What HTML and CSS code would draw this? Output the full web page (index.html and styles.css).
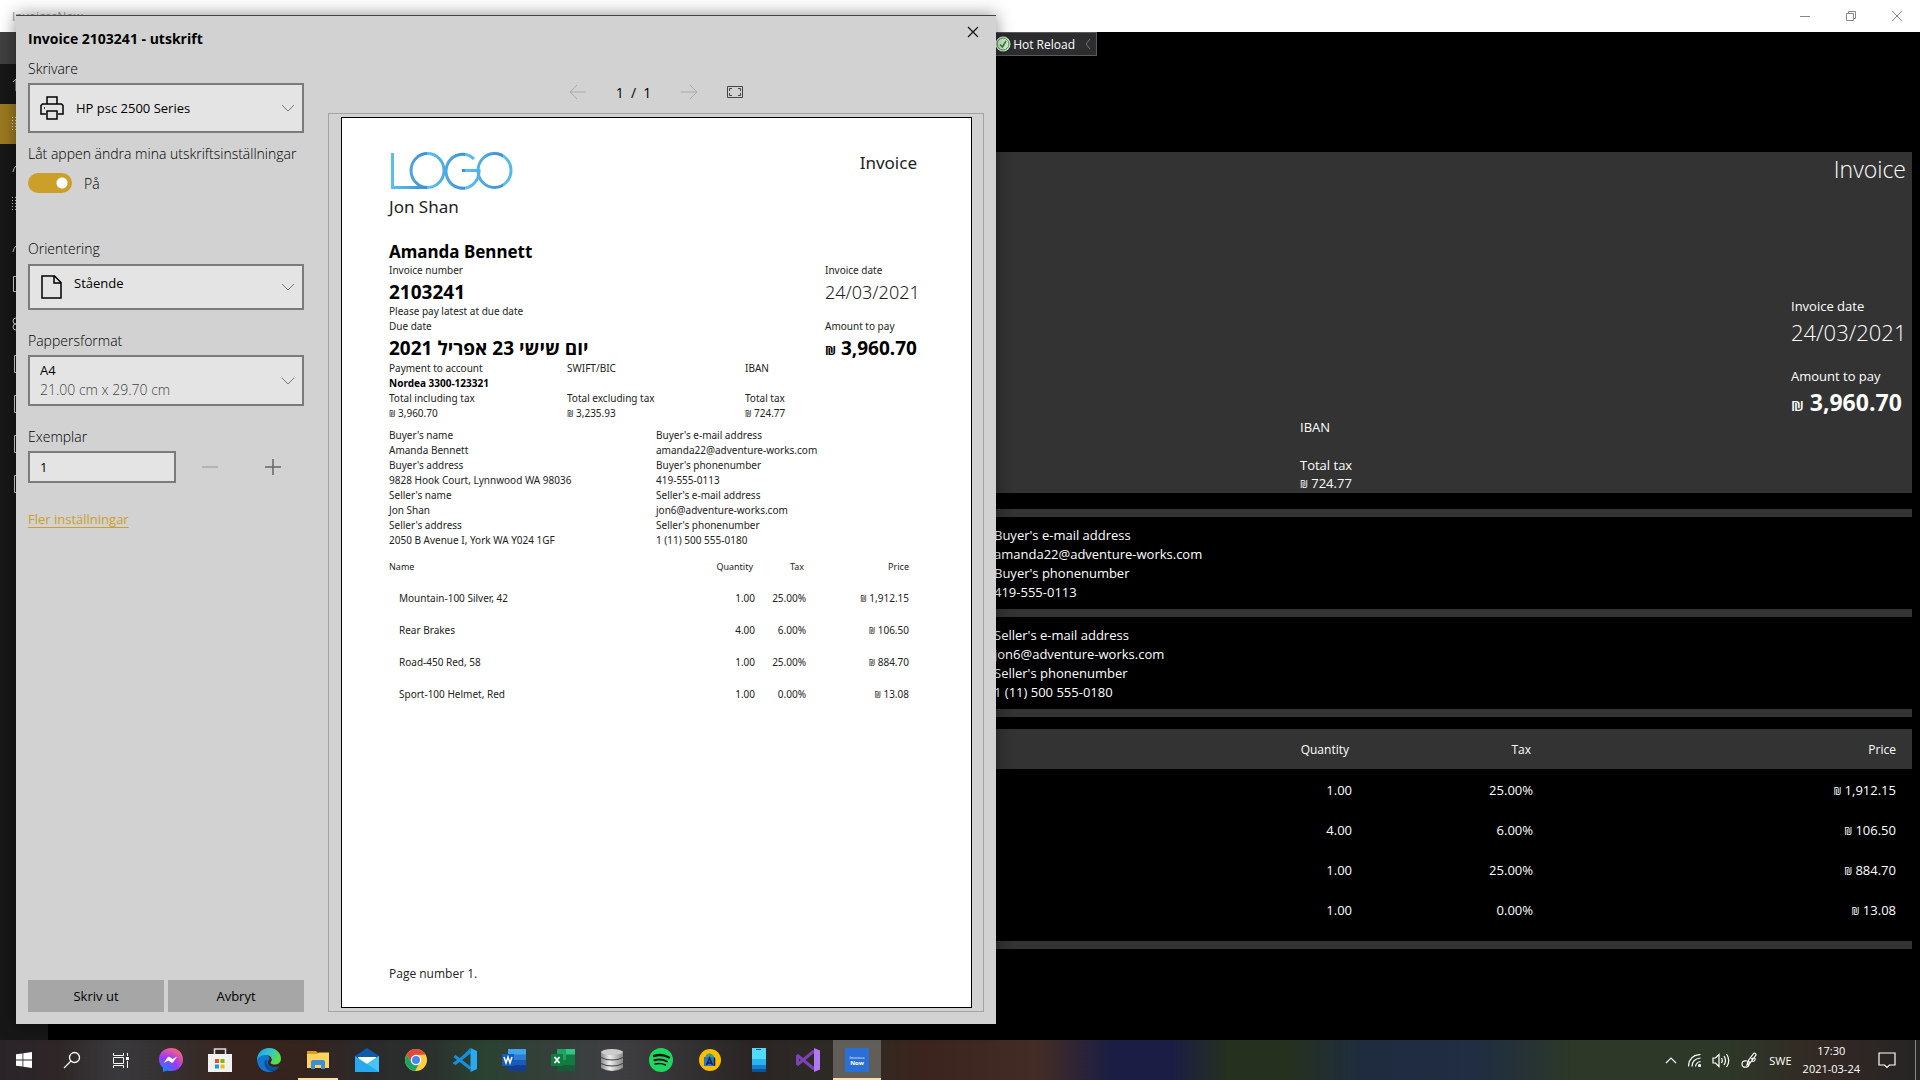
FILE: index.html
```html
<!DOCTYPE html>
<html lang="sv">
<head>
<meta charset="utf-8">
<title>InvoicesNow</title>
<link rel="stylesheet" href="styles.css">
</head>
<body>
<div class="desktop">
  <div class="app">
    <header class="titlebar">
      <span class="app-name">InvoicesNow</span>
      <button class="win-btn" aria-label="Minimize"><svg width="12" height="12" viewBox="0 0 12 12"><path d="M1 6.5h10"/></svg></button>
      <button class="win-btn" aria-label="Restore"><svg width="12" height="12" viewBox="0 0 12 12"><path d="M1.500 3.500h7v7h-7zM3.500 3.500v-2h7v7h-2"/></svg></button>
      <button class="win-btn" aria-label="Close"><svg width="12" height="12" viewBox="0 0 12 12"><path d="M1 1l10 10M11 1L1 11"/></svg></button>
    </header>
    <div class="app-body">
      <nav class="nav" aria-label="Main">
        <div class="nav-back"></div>
        <a href="#" class="nav-item" aria-label="Home"><svg width="20" height="20" viewBox="0 0 20 20"><path d="M1 8l3-3v12h12V5"/></svg></a>
        <a href="#" class="nav-item current" aria-label="Invoices"><svg width="20" height="20" viewBox="0 0 20 20"><path stroke-dasharray="1 2" d="M.5 3v14M3.500 3v14M7 4h12M7 10h12M7 16h12"/></svg></a>
        <a href="#" class="nav-item" aria-label="Customers"><svg width="20" height="20" viewBox="0 0 20 20"><path d="M1 18q1-7 8-8t9 8M5 6a4 4 0 108 0 4 4 0 10-8 0"/></svg></a>
        <a href="#" class="nav-item" aria-label="Items"><svg width="20" height="20" viewBox="0 0 20 20"><path stroke-dasharray="1 2" d="M.5 3v14M3.500 3v14M7 4h12M7 10h12M7 16h12"/></svg></a>
        <a href="#" class="nav-item" aria-label="Sellers"><svg width="20" height="20" viewBox="0 0 20 20"><path d="M1 18q1-7 8-8t9 8M5 6a4 4 0 108 0 4 4 0 10-8 0"/></svg></a>
        <a href="#" class="nav-item" aria-label="Documents"><svg width="20" height="20" viewBox="0 0 20 20"><path d="M1.500 2.500h13v15h-13z"/></svg></a>
        <a href="#" class="nav-item" aria-label="Taxes"><svg width="20" height="20" viewBox="0 0 20 20"><path d="M1 7a3 3 0 106 0 3 3 0 10-6 0M1 13a3 3 0 106 0 3 3 0 10-6 0"/></svg></a>
        <a href="#" class="nav-item" aria-label="Page 1"><svg width="20" height="20" viewBox="0 0 20 20"><path d="M2.500 1.500h13v17h-13z"/></svg></a>
        <a href="#" class="nav-item" aria-label="Page 2"><svg width="20" height="20" viewBox="0 0 20 20"><path d="M2.500 1.500h13v17h-13z"/></svg></a>
        <a href="#" class="nav-item" aria-label="Page 3"><svg width="20" height="20" viewBox="0 0 20 20"><path d="M2.500 1.500h13v17h-13z"/></svg></a>
        <a href="#" class="nav-item" aria-label="Page 4"><svg width="20" height="20" viewBox="0 0 20 20"><path d="M2.500 1.500h13v17h-13z"/></svg></a>
      </nav>
      <main class="content">
        <div class="toolbar-row">
          <button class="hot-reload"><svg width="16" height="16" viewBox="0 0 16 16"><circle cx="8" cy="8" r="7.500" fill="#e4f1e4"/><circle cx="8" cy="8" r="6" fill="#d5ecd5" stroke="#3c9a3f"/><path d="M5 8.500l2.500 2.500L11 5" fill="none" stroke="#2c8a30" stroke-width="1.600"/></svg><span>Hot Reload</span><svg width="6" height="12" viewBox="0 0 6 12"><path d="M5 1L1 6l4 5" fill="none" stroke="#777"/></svg></button>
        </div>
        <section class="panel">
          <h1 class="panel-title">Invoice</h1>
          <div class="panel-side">
            <div class="txt">Invoice date</div>
            <div class="big">24/03/2021</div>
            <div class="txt amount-label">Amount to pay</div>
            <div class="big strong"><small>₪</small> 3,960.70</div>
          </div>
          <div class="panel-iban">
            <div class="txt">IBAN</div>
            <div class="txt tax-label">Total tax</div>
            <div class="txt tax-value"><small>₪</small> 724.77</div>
          </div>
        </section>
        <section class="contact">
          <div class="txt">Buyer's e-mail address</div><div class="txt">amanda22@adventure-works.com</div><div class="txt">Buyer's phonenumber</div><div class="txt">419-555-0113</div>
        </section>
        <section class="contact">
          <div class="txt">Seller's e-mail address</div><div class="txt">jon6@adventure-works.com</div><div class="txt">Seller's phonenumber</div><div class="txt">1 (11) 500 555-0180</div>
        </section>
        <div class="bar"></div>
        <table class="lines">
          <thead><tr><th></th><th class="q">Quantity</th><th class="t">Tax</th><th class="p">Price</th></tr></thead>
          <tbody>
            <tr><td></td><td class="q">1.00</td><td class="t">25.00%</td><td class="p"><small>₪</small> 1,912.15</td></tr>
            <tr><td></td><td class="q">4.00</td><td class="t">6.00%</td><td class="p"><small>₪</small> 106.50</td></tr>
            <tr><td></td><td class="q">1.00</td><td class="t">25.00%</td><td class="p"><small>₪</small> 884.70</td></tr>
            <tr><td></td><td class="q">1.00</td><td class="t">0.00%</td><td class="p"><small>₪</small> 13.08</td></tr>
          </tbody>
        </table>
        <div class="bar"></div>
      </main>
    </div>
  </div>

  <div class="dialog" role="dialog" aria-labelledby="dlg-title">
    <form class="settings">
      <h2 id="dlg-title">Invoice 2103241 - utskrift</h2>
      <label class="label first" for="printer">Skrivare</label>
      <div class="combo tall">
        <select id="printer" class="with-icon"><option>HP psc 2500 Series</option></select>
        <svg class="lead" width="24" height="24" viewBox="0 0 24 24"><path d="M7 8V1h10v7M6 18H1V9.500L2.500 8h19L23 9.500V18h-5M7 15h10v8H7z"/><path d="M4 12h1"/></svg>
        <svg class="chev" width="14" height="8" viewBox="0 0 14 8"><path d="M1 1l6 6 6-6"/></svg>
      </div>
      <label class="label setting" for="allow">Låt appen ändra mina utskriftsinställningar</label>
      <div class="switch-row"><input id="allow" type="checkbox" class="switch" checked><span>På</span></div>
      <label class="label orient" for="orient">Orientering</label>
      <div class="combo mid">
        <select id="orient" class="with-icon doc"><option>Stående</option></select>
        <svg class="lead" width="24" height="24" viewBox="0 0 24 24"><path d="M2 1h12.500L21 7.500V23H2zM14 1v7h7"/></svg>
        <svg class="chev" width="14" height="8" viewBox="0 0 14 8"><path d="M1 1l6 6 6-6"/></svg>
      </div>
      <label class="label paper" for="paper">Pappersformat</label>
      <div class="combo size">
        <select id="paper" class="two-line"><option>A4</option></select>
        <span class="dims">21.00 cm x 29.70 cm</span>
        <svg class="chev" width="14" height="8" viewBox="0 0 14 8"><path d="M1 1l6 6 6-6"/></svg>
      </div>
      <label class="label paper" for="copies">Exemplar</label>
      <div class="copies">
        <input id="copies" type="text" value="1">
        <button type="button" class="step off" aria-label="Minska"><svg width="16" height="16" viewBox="0 0 16 16"><path d="M0 8h16"/></svg></button>
        <button type="button" class="step" aria-label="Öka"><svg width="16" height="16" viewBox="0 0 16 16"><path d="M0 8h16M8 0v16"/></svg></button>
      </div>
      <a href="#" class="more">Fler inställningar</a>
      <div class="actions"><button type="button">Skriv ut</button><button type="button">Avbryt</button></div>
    </form>
    <div class="preview">
      <div class="close-row"><button class="close" aria-label="Stäng"><svg width="12" height="12" viewBox="0 0 12 12"><path d="M1 1l10 10M11 1L1 11" stroke="#111" fill="none" stroke-width="1.200"/></svg></button></div>
      <div class="pager">
        <button aria-label="Föregående"><svg width="18" height="16" viewBox="0 0 18 16"><path d="M17 8H1M8 1L1 8l7 7" stroke="#aaa"/></svg></button>
        <span class="pages">1&nbsp; / &nbsp;1</span>
        <button aria-label="Nästa"><svg width="18" height="16" viewBox="0 0 18 16"><path d="M1 8h16M10 1l7 7-7 7" stroke="#aaa"/></svg></button>
        <button class="fit" aria-label="Anpassa"><svg width="16" height="12" viewBox="0 0 16 12"><path d="M.5.5h15v11H.5z" stroke="#444"/><path d="M2.500 5V2.500H5M11 2.500h2.500V5M13.500 7v2.500H11M5 9.500H2.500V7" stroke="#444"/></svg></button>
      </div>
      <div class="frame">
        <article class="sheet">
          <div class="sheet-top">
            <svg class="logo" role="img" aria-label="LOGO" width="124" height="38" viewBox="0 0 124 38"><defs><linearGradient id="lg" gradientUnits="userSpaceOnUse" x1="0" y1="0" x2="38" y2="0" spreadMethod="repeat"><stop offset="0" stop-color="#5bc3f0"/><stop offset="1" stop-color="#3f8fd4"/></linearGradient></defs><g fill="none" stroke="url(#lg)" stroke-width="3"><path d="M3.500 1v34.500H38"/><ellipse cx="38.500" cy="18.500" rx="16.500" ry="17"/><path d="M85 7A16.500 17 0 1 0 90 18.500H73"/><ellipse cx="105.500" cy="18.500" rx="16.500" ry="17"/></g></svg>
            <div class="s-lg">Invoice</div>
          </div>
          <div class="s-lg">Jon Shan</div>
          <div class="split name-row">
            <div>
              <div class="s-lg strong name">Amanda Bennett</div>
              <div class="s-sm">Invoice number</div>
              <div class="s-lg strong hi">2103241</div>
              <div class="s-sm">Please pay latest at due date</div>
              <div class="s-sm">Due date</div>
              <div class="s-lg strong hi heb" dir="rtl" lang="he">יום שישי 23 אפריל 2021</div>
            </div>
            <div class="dates">
              <div class="s-sm">Invoice date</div>
              <div class="s-lg hi light">24/03/2021</div>
              <div class="s-sm gap">Amount to pay</div>
              <div class="s-lg strong hi"><small>₪</small> 3,960.70</div>
            </div>
          </div>
          <div class="three">
            <div class="s-sm">Payment to account</div><div class="s-sm">SWIFT/BIC</div><div class="s-sm">IBAN</div>
            <div class="s-sm strong full">Nordea 3300-123321</div>
            <div class="s-sm">Total including tax</div><div class="s-sm">Total excluding tax</div><div class="s-sm">Total tax</div>
            <div class="s-sm"><small>₪</small> 3,960.70</div><div class="s-sm"><small>₪</small> 3,235.93</div><div class="s-sm"><small>₪</small> 724.77</div>
          </div>
          <div class="two">
            <div class="s-sm">Buyer's name</div><div class="s-sm">Buyer's e-mail address</div>
            <div class="s-sm">Amanda Bennett</div><div class="s-sm">amanda22@adventure-works.com</div>
            <div class="s-sm">Buyer's address</div><div class="s-sm">Buyer's phonenumber</div>
            <div class="s-sm">9828 Hook Court, Lynnwood WA 98036</div><div class="s-sm">419-555-0113</div>
            <div class="s-sm">Seller's name</div><div class="s-sm">Seller's e-mail address</div>
            <div class="s-sm">Jon Shan</div><div class="s-sm">jon6@adventure-works.com</div>
            <div class="s-sm">Seller's address</div><div class="s-sm">Seller's phonenumber</div>
            <div class="s-sm">2050 B Avenue I, York WA Y024 1GF</div><div class="s-sm">1 (11) 500 555-0180</div>
          </div>
          <table class="items">
            <thead><tr><th class="n">Name</th><th>Quantity</th><th class="it">Tax</th><th class="ip">Price</th></tr></thead>
            <tbody>
              <tr><td class="n">Mountain-100 Silver, 42</td><td>1.00</td><td class="it">25.00%</td><td class="ip"><small>₪</small> 1,912.15</td></tr>
              <tr><td class="n">Rear Brakes</td><td>4.00</td><td class="it">6.00%</td><td class="ip"><small>₪</small> 106.50</td></tr>
              <tr><td class="n">Road-450 Red, 58</td><td>1.00</td><td class="it">25.00%</td><td class="ip"><small>₪</small> 884.70</td></tr>
              <tr><td class="n">Sport-100 Helmet, Red</td><td>1.00</td><td class="it">0.00%</td><td class="ip"><small>₪</small> 13.08</td></tr>
            </tbody>
          </table>
          <div class="page-no">Page number 1.</div>
        </article>
      </div>
    </div>
  </div>

  <footer class="taskbar">
    <div class="system">
      <button class="task" aria-label="Start"><svg width="16" height="16" viewBox="0 0 16 16"><path fill="#fff" d="M0 2.300l6.500-.9v6.200H0zM7.300 1.300L16 0v7.600H7.300zM0 8.400h6.500v6.200L0 13.700zM7.300 8.400H16V16l-8.700-1.300z"/></svg></button>
      <button class="task" aria-label="Sök"><svg width="18" height="18" viewBox="0 0 18 18"><g fill="none" stroke="#fff" stroke-width="1.300"><circle cx="11.500" cy="6.500" r="5"/><path d="M8 10l-7 7"/></g></svg></button>
      <button class="task" aria-label="Aktivitetsvy"><svg width="17" height="17" viewBox="0 0 17 17"><g fill="none" stroke="#fff"><path d="M1.500 1v2.500h10V1M1.500 16v-2.500h10V16M1.500 5.500h10v6h-10zM15.500 1v3M15.500 9v7"/></g><path fill="#fff" d="M14 5h3v3h-3z"/></svg></button>
    </div>
    <div class="pinned">
      <button class="task" aria-label="Messenger"><svg width="24" height="24" viewBox="0 0 24 24"><defs><radialGradient id="ms" cx=".2" cy="1" r="1.100"><stop offset="0" stop-color="#0a8dff"/><stop offset=".55" stop-color="#9b38fa"/><stop offset="1" stop-color="#ff6575"/></radialGradient></defs><path fill="url(#ms)" d="M12 0C5 0 0 5 0 11.500c0 3.500 1.500 6.300 4 8.300V24l4-1.500c1.200.4 2.600.6 4 .6 7 0 12-5 12-11.600S19 0 12 0z"/><path fill="#fff" d="M4.800 15l3.600-5.600c.6-.8 1.600-1 2.400-.4l2.700 2 4.500-2.600-3.600 5.600c-.6.8-1.600 1-2.400.4l-2.700-2z"/></svg></button>
      <button class="task" aria-label="Microsoft Store"><svg width="24" height="24" viewBox="0 0 24 24"><path fill="none" stroke="#ddd" stroke-width="1.500" d="M6.500 7V1h11v6"/><path fill="#f1f1f1" d="M0 6h24v18H0z"/><path fill="#f25022" d="M7 11h4v4H7z"/><path fill="#7fba00" d="M12.500 11h4v4h-4z"/><path fill="#00a4ef" d="M7 16.500h4v4H7z"/><path fill="#ffb900" d="M12.500 16.500h4v4h-4z"/></svg></button>
      <button class="task" aria-label="Edge"><svg width="24" height="24" viewBox="0 0 24 24"><defs><linearGradient id="ed" x1="0" y1="0" x2="1" y2=".4"><stop offset="0" stop-color="#1a9be0"/><stop offset=".5" stop-color="#2fc2d8"/><stop offset="1" stop-color="#5fdc4a"/></linearGradient></defs><path fill="#1277cc" d="M0 11C1 7 6 5 10 7c3 1.500 3 4 1.500 5.500C9 17 15 21 22 18.500 18 25 8 26 3 20 1 17.500 0 14 0 11z"/><path fill="url(#ed)" d="M0 12C0 5 5 0 12 0s12 5 12 10.500c0 4-3 6-6.500 6-3 0-4.500-1-3.500-2.500 2-3 0-7-5-7-4.500 0-8 2-9 5z"/><path fill="#0c4f9e" d="M8 12c-2 5 1 11 7 11.500 3-.6 5.600-2.500 7-5-6 2.500-12-.5-12-4.500 0-1 .5-2 .5-2z"/></svg></button>
      <button class="task open" aria-label="Utforskaren"><svg width="22" height="20" viewBox="0 0 22 20"><path fill="#dd9e16" d="M0 1h9l2 2v4H0z"/><path fill="#ffd45e" d="M0 4h10l2-1.500h10V18H0z"/><path fill="#3c8ed6" d="M4 19v-7q0-2 2-2h10q2 0 2 2v7h-4v-4H8v4z"/></svg></button>
      <button class="task" aria-label="E-post"><svg width="24" height="24" viewBox="0 0 24 24"><path fill="#0b5cad" d="M0 8L12 0l12 8v4H0z"/><path fill="#fff" d="M3 9h18v7H3z"/><path fill="#2aa8ee" d="M0 8l12 8 12-8v16H0z"/><path fill="#41c6f7" d="M24 8v16L12 16z"/></svg></button>
      <button class="task" aria-label="Chrome"><svg width="22" height="22" viewBox="0 0 22 22"><circle cx="11" cy="11" r="11" fill="#ffcd40"/><path fill="#de4a3c" d="M1.500 5.500a11 11 0 0119 0L11 6l-4.500 7.500z"/><path fill="#1da362" d="M1.500 5.500a11 11 0 008.500 16.400l4.500-8-8-.4z"/><circle cx="11" cy="11" r="5.200" fill="#fff"/><circle cx="11" cy="11" r="4" fill="#4587f2"/></svg></button>
      <button class="task" aria-label="VS Code"><svg width="24" height="24" viewBox="0 0 24 24"><path fill="#1486cf" d="M17 0L3.500 14.200 1 16.500-.2 15.500v-1L17 4z"/><path fill="none" stroke="#1890d8" stroke-width="3" d="M1.500 8l16 12.500M1.500 16l16-12.500"/><path fill="#29a9f2" d="M17.500 0L24 3v18l-6.500 3z"/></svg></button>
      <button class="task" aria-label="Word"><svg width="24" height="22" viewBox="0 0 24 22"><path fill="#41a5ee" d="M6 0h18v6H6z"/><path fill="#2b7cd3" d="M6 5.500h18V11H6z"/><path fill="#185abd" d="M6 11h18v5.500H6z"/><path fill="#103f91" d="M6 16.500h18V22H6z"/><path fill="#185abd" d="M0 5h12v12H0z"/><path fill="none" stroke="#fff" stroke-width="1.500" d="M2 8l2 6 2-6 2 6 2-6"/></svg></button>
      <button class="task" aria-label="Excel"><svg width="24" height="22" viewBox="0 0 24 22"><path fill="#21a366" d="M6 0h9v11H6z"/><path fill="#33c481" d="M15 0h9v6h-9z"/><path fill="#107c41" d="M6 11h9v5H6zM15 5.500h9V11h-9z"/><path fill="#185c37" d="M6 16h18v6H6z"/><path fill="#107c41" d="M15 11h9v5h-9zM0 5h12v12H0z"/><path fill="none" stroke="#fff" stroke-width="1.800" d="M3.500 8l5 6M8.500 8l-5 6"/></svg></button>
      <button class="task" aria-label="Databas"><svg width="22" height="22" viewBox="0 0 22 22"><defs><linearGradient id="db"><stop offset="0" stop-color="#888"/><stop offset=".4" stop-color="#eee"/><stop offset="1" stop-color="#888"/></linearGradient></defs><g fill="url(#db)"><path d="M0 15q11 5 22 0v4q-11 6-22 0z"/><path d="M0 9q11 5 22 0v5q-11 5-22 0z"/><path d="M0 3q11 5 22 0v5q-11 5-22 0z"/></g><ellipse cx="11" cy="3" rx="11" ry="3" fill="#ccc"/></svg></button>
      <button class="task" aria-label="Spotify"><svg width="24" height="24" viewBox="0 0 24 24"><circle cx="12" cy="12" r="12" fill="#1ed760"/><g fill="none" stroke="#191414" stroke-linecap="round"><path stroke-width="2.400" d="M5 8q8-2.500 15 1.500"/><path stroke-width="2" d="M5.500 12.200q7-2 12.500 1.300"/><path stroke-width="1.600" d="M6 16q6-1.500 10.500 1"/></g></svg></button>
      <button class="task" aria-label="AI"><svg width="22" height="22" viewBox="0 0 22 22"><circle cx="11" cy="11" r="11" fill="#fbbc05"/><path fill="#35a56f" d="M7 6q4-4 8 1v3H7z"/><path fill="#2b73d2" d="M5 8h11v9H5z"/><path fill="none" stroke="#15233c" stroke-width="1.500" d="M7.500 16l3-7 3 7M8.500 14h4M15.500 9v8"/></svg></button>
      <button class="task" aria-label="Telefon"><svg width="14" height="24" viewBox="0 0 14 24"><path fill="#50dcf8" d="M0 0h14v24H0z"/><path fill="#29b4ef" d="M0 11h14v13H0z"/><path fill="#127fd3" d="M0 17h14v7H0z"/><path fill="#115293" d="M0 21h14v3H0z"/><path stroke="#175d88" d="M4 1.500h5"/></svg></button>
      <button class="task" aria-label="Visual Studio"><svg width="24" height="24" viewBox="0 0 24 24"><path fill="none" stroke="#7942b5" stroke-width="3" d="M1.500 7v10M1 7l17 14M1 17L18 3"/><path fill="#b179f1" d="M18 0l6 2.500v19L18 24z"/></svg></button>
      <button class="task open active"><span class="tile"><small>Invoices</small><b>Now</b></span></button>
    </div>
    <div class="tray">
      <svg width="12" height="7" viewBox="0 0 12 7"><path d="M1 6l5-5 5 5"/></svg>
      <svg width="13" height="13" viewBox="0 0 13 13"><path d="M.5 12.500Q1 1 12.500.500M4 12.500Q4 5 12.500 4M7.500 12.500Q8 8.500 12.500 7.500"/><circle cx="11.500" cy="11.500" r="1" fill="#fff"/></svg>
      <svg width="18" height="15" viewBox="0 0 18 15"><path d="M1 5v5h2.500L7 13.500v-12L3.500 5zM9.500 5q1.500 2.500 0 5M12 3q3 4.500 0 9M14.500 1q4.500 6.500 0 13"/></svg>
      <svg class="pen" width="17" height="16" viewBox="0 0 17 16"><path d="M6 9q-5-1-5 3t5 3q3-1 2-6M6 13l1-4 6-8q2 0 2 2L9 11zM10 7q5-2 4 1-1 2-3 1"/></svg>
      <span class="lang">SWE</span>
      <div class="clock"><div>17:30</div><div>2021-03-24</div></div>
      <svg class="note" width="18" height="17" viewBox="0 0 18 17"><path d="M1 1h16v12h-5.500L9 15.500 6.500 13H1z"/></svg>
      <div class="peek"></div>
    </div>
  </footer>
</div>
</body>
</html>
```
FILE: styles.css
```css
* { box-sizing: border-box; }
body { margin: 0; background: #000; font-family: "Open Sans", "Noto Sans", sans-serif; font-size: 13px; }
button { border: 0; padding: 0; background: none; font: inherit; color: inherit; }
h1, h2 { margin: 0; }
svg { flex: none; display: block; }
small { font-size: 10px; font-weight: 400; }
.desktop { position: relative; display: flex; flex-direction: column; height: 100vh; overflow: hidden; }

/* application window */
.app { flex: 1; min-height: 0; display: flex; flex-direction: column; overflow: hidden; color: #fff; }
.titlebar { display: flex; flex: none; height: 32px; align-items: center; background: #fff; color: #999; font-size: 12px; }
.app-name { flex: 1; padding-left: 12px; }
.win-btn { width: 46px; height: 32px; display: grid; place-items: center; }
.win-btn svg { fill: none; stroke: #888; }
.app-body { flex: 1; min-height: 0; display: flex; }
.nav { width: 48px; background: #171717; }
.nav-back { height: 32px; background: #404040; }
.nav-item { display: flex; height: 40px; align-items: center; padding-left: 12px; }
.nav-item svg { fill: none; stroke: #ddd; }
.nav-item.current { background: #9d7a20; }
.content { flex: 1; padding: 0 8px; }
.toolbar-row { height: 120px; display: flex; justify-content: center; }
.hot-reload { display: flex; align-items: center; gap: 2px; height: 24px; width: 226px; padding: 0 5px 0 0; justify-content: flex-end; background: #2d2d30; border: 1px solid #5a5a5e; color: #fff; font-size: 12px; }
.hot-reload span { margin-right: 8px; }
.txt { line-height: 19px; }
.big { font-size: 22px; font-weight: 300; line-height: 32px; }
.big.strong { font-size: 23px; font-weight: 700; }
.big small { font-size: 15px; font-weight: 600; }
.strong { font-weight: 700; }
.panel { display: grid; grid-template-columns: 1fr auto; grid-template-rows: 1fr auto auto; height: 341px; padding: 0 6px 0 20px; background: #333; }
.panel-title { grid-column: 1 / 3; padding-top: 2px; font-size: 23px; font-weight: 300; line-height: 30px; text-align: right; }
.panel-side { grid-column: 2; width: 115px; margin-bottom: -3px; white-space: nowrap; }
.amount-label { margin-top: 19px; }
.panel-iban { grid-column: 1 / 3; padding-left: 1224px; }
.tax-label { margin-top: 19px; }
.tax-value { line-height: 17px; }
.contact { height: 100px; padding: 9px 0 0 938px; border-top: 8px solid #333; }
.panel + .contact { margin-top: 16px; }
.bar { height: 8px; background: #333; }
.lines { width: 100%; margin: 12px 0; border-collapse: collapse; table-layout: fixed; text-align: right; }
.lines th { height: 40px; padding: 0; background: #333; font-size: 12px; font-weight: 400; }
.lines td { height: 40px; padding: 1px 0 0; }
.lines th:first-child { width: 1100px; }
.lines .t { width: 181px; }
.lines .p { width: 379px; padding-right: 16px; }
.lines th.q { padding-right: 3px; }
.lines th.t { padding-right: 2px; }

/* print dialog */
.dialog { position: absolute; top: 15px; bottom: 56px; left: 16px; width: 980px; display: flex; gap: 24px; padding: 0 12px; background: #d2d2d2; border-top: 1px solid #444; box-shadow: 0 0 16px rgba(0, 0, 0, .45); color: #000; }
.settings { width: 276px; display: flex; flex-direction: column; padding: 12px 0; font-size: 13px; }
.settings h2 { font-size: 14px; line-height: 22px; }
.label { font-size: 14px; line-height: 20px; font-weight: 300; white-space: nowrap; }
.first { margin: 9px 0 4px; }
.combo { display: grid; }
.combo > * { grid-area: 1 / 1; }
.combo select { appearance: none; width: 100%; height: 50px; border: 2px solid #7b7b7b; border-radius: 0; background: #e4e4e4; color: #000; font: inherit; padding: 0 30px 0 10px; }
.combo .with-icon { padding-left: 46px; }
.combo .doc { height: 46px; padding: 0 30px 8px 44px; }
.combo .two-line { height: 51px; padding-bottom: 21px; }
.combo svg, .dims { align-self: center; pointer-events: none; fill: none; stroke: #000; }
.lead { margin-left: 12px; stroke-width: 1.500; }
.combo .chev { justify-self: end; margin-right: 9px; stroke: #777; }
.combo .dims { align-self: end; padding: 0 0 6px 12px; font-size: 14px; font-weight: 300; line-height: 20px; color: #444; }
.setting { margin: 11px 0 9px; }
.switch-row { display: flex; align-items: center; gap: 12px; height: 20px; font-size: 14px; font-weight: 300; }
.switch { appearance: none; width: 44px; height: 20px; margin: 0; border-radius: 10px; background: radial-gradient(circle at 34px 10px, #fff 5px, #cc9f29 6px); }
.orient { margin: 46px 0 5px; }
.paper { margin: 21px 0 4px; }
.copies { display: flex; align-items: center; }
.copies input { width: 148px; height: 32px; margin-right: 2px; border: 2px solid #7b7b7b; background: #e4e4e4; padding: 0 10px; font: inherit; }
.step { width: 64px; height: 32px; display: grid; place-items: center; }
.step svg { stroke: #666; stroke-width: 1.500; }
.step.off svg { stroke: #aaa; }
.more { align-self: flex-start; margin-top: 26px; line-height: 20px; color: #cc9f29; text-underline-offset: 3px; }
.actions { display: flex; gap: 4px; margin-top: auto; }
.actions button { flex: 1; height: 32px; background: #a6a6a6; }
.preview { flex: 1; min-width: 0; display: flex; flex-direction: column; padding-bottom: 12px; }
.close-row { display: flex; justify-content: flex-end; height: 56px; padding-top: 10px; padding-right: 5px; }
.close { height: 12px; }
.pager { display: flex; justify-content: center; align-items: center; height: 41px; padding-bottom: 1px; gap: 29px; }
.pager svg { fill: none; }
.pages { font-size: 14px; }
.frame { flex: 1; display: flex; padding: 3px 11px 3px 12px; border: 1px solid #a3a3a3; }

/* previewed page */
.sheet { flex: 1; display: flex; flex-direction: column; padding: 34px 54px 25px 47px; border: 1px solid #000; background: #fff; color: #222; font-family: "Noto Sans", "Open Sans", sans-serif; }
.sheet-top { display: flex; justify-content: space-between; height: 44px; }
.s-lg { font-size: 17px; line-height: 22px; }
.s-sm { font-size: 10px; line-height: 15px; white-space: nowrap; }
.s-lg.strong, .s-sm.strong { color: #000; }
.s-lg small { font-size: 12px; font-weight: 700; }
.s-sm small, .items small { font-size: 8px; }
.name { line-height: 23px; }
.hi { height: 26px; padding-top: 2px; line-height: 24px; }
.hi.strong { font-size: 19px; }
.light { font-size: 18px; font-weight: 300; }
.split { display: flex; justify-content: space-between; align-items: flex-end; }
.name-row { margin-top: 22px; }
.dates { width: 92px; white-space: nowrap; }
.gap { margin-top: 15px; }
.three { display: grid; grid-template-columns: 178px 178px 1fr; margin-top: 1px; }
.full { grid-column: 1 / 4; }
.two { display: grid; grid-template-columns: 267px 1fr; margin-top: 7px; }
.items { margin-top: 2px; border-collapse: collapse; font-size: 10px; text-align: right; }
.items th { height: 32px; padding: 0 2px 0 0; font-size: 9px; font-weight: 400; }
.items td { height: 32px; padding: 0; }
.items .n { text-align: left; }
.items td.n { padding-left: 10px; }
.items .it { width: 51px; }
.items .ip { width: 111px; padding-right: 8px; }
.page-no { margin-top: auto; font-family: "Open Sans", sans-serif; font-size: 12px; line-height: 16px; }

/* taskbar */
.taskbar { display: flex; flex: none; height: 40px; color: #fff; background: linear-gradient(90deg, #2a242a 0, #2e2626 3%, #39393d 6%, #35302f 9%, #38241e 12%, #35231e 16%, #2b2a2b 19%, #2b2e2d 22%, #2a4131 25%, #3f3f43 32%, #2a2524 39%, #2e2b25 44%, #3b241d 48%, #432c25 54%, #1b1d44 58%, #1b1d44 61%, #26301e 64%, #26301e 67%, #1f2c40 71%, #202d42 77%, #2d3828 82%, #2d3828 90%, #332824 95%, #262424 100%); }
.system { display: flex; margin-right: 3px; }
.pinned { display: flex; gap: 1px; }
.task { width: 48px; display: grid; place-items: center; }
.open { background: linear-gradient(#fce2a0, #fce2a0) center bottom / 40px 2px no-repeat; }
.active { background: linear-gradient(#fce2a0, #fce2a0) center bottom / 48px 2px no-repeat, #615d59; }
.tile { width: 24px; height: 24px; background: #2a6fd6; display: flex; flex-direction: column; align-items: center; justify-content: center; font-size: 6px; line-height: 6px; }
.tile small { font-size: 4px; line-height: 5px; }
.tray { display: flex; align-items: center; margin-left: auto; gap: 11px; font-size: 11px; }
.tray svg { fill: none; stroke: #fff; stroke-width: 1.200; }
.clock { line-height: 18px; text-align: center; }
.note { margin-left: 7px; }
.peek { width: 5px; height: 40px; margin-left: 8px; border-left: 1px solid #888; }
```
